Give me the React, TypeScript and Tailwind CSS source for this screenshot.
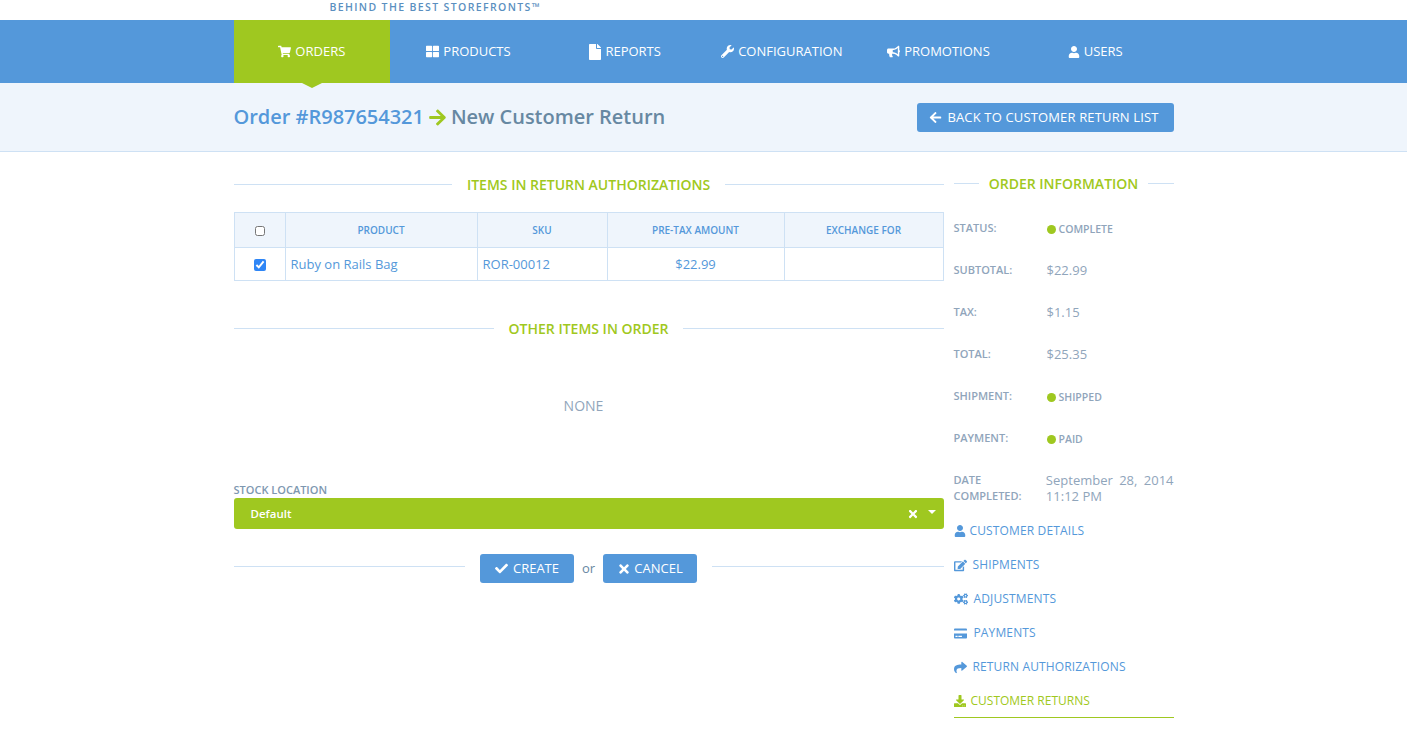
import type { ReactNode } from "react"
import {
  FaArrowLeft,
  FaArrowRight,
  FaBullhorn,
  FaCheck,
  FaCogs,
  FaCreditCard,
  FaDownload,
  FaEdit,
  FaFile,
  FaShare,
  FaShoppingCart,
  FaThLarge,
  FaTimes,
  FaUser,
  FaWrench,
} from "react-icons/fa"

const tabs = [
  { label: "ORDERS", icon: <FaShoppingCart className="text-[13px]" />, active: true },
  { label: "PRODUCTS", icon: <FaThLarge className="text-[13px]" /> },
  { label: "REPORTS", icon: <FaFile className="text-[16px] -mx-[2px]" /> },
  { label: "CONFIGURATION", icon: <FaWrench className="text-[13px]" /> },
  { label: "PROMOTIONS", icon: <FaBullhorn className="text-[13px]" /> },
  { label: "USERS", icon: <FaUser className="text-[12px]" /> },
]

const sideLinks = [
  { label: "CUSTOMER DETAILS", icon: <FaUser className="text-[12px]" />, gap: "gap-[4px]" },
  { label: "SHIPMENTS", icon: <FaEdit className="text-[13px]" />, gap: "gap-[6px]" },
  { label: "ADJUSTMENTS", icon: <FaCogs className="text-[14px]" />, gap: "gap-[6px]" },
  { label: "PAYMENTS", icon: <FaCreditCard className="text-[13px]" />, gap: "gap-[7px]" },
  { label: "RETURN AUTHORIZATIONS", icon: <FaShare className="text-[13px]" />, gap: "gap-[6px]" },
]

const SectionTitle = ({ title, gap = "gap-[15px]" }: { title: string; gap?: string }) => (
  <div className={`flex items-center ${gap} h-[20px]`}>
    <div className="flex-1 h-px bg-[#cee1f4] -mt-px" />
    <h2 className="text-[14px] font-semibold leading-5 text-[#9fc820]">{title}</h2>
    <div className="flex-1 h-px bg-[#cee1f4] -mt-px" />
  </div>
)

const ActionButton = ({ icon, children, className = "" }: { icon: ReactNode; children: ReactNode; className?: string }) => (
  <button className={`flex items-center justify-center gap-[5px] h-[29px] rounded-[3px] bg-[#5498da] text-white text-[13px] font-medium ${className}`}>
    {icon}
    <span>{children}</span>
  </button>
)

const InfoRow = ({ label, children }: { label: ReactNode; children: ReactNode }) => (
  <div className="flex h-[42px] items-start">
    <div className="w-[93px] text-[11px] font-semibold leading-4 text-[#90a5bb]">{label}</div>
    <div className="flex-1 text-[13px] leading-4 text-[#90a5bb] whitespace-nowrap">{children}</div>
  </div>
)

const Status = ({ label }: { label: string }) => (
  <div className="flex items-center gap-[3px] h-4 mt-px text-[10.5px] font-semibold">
    <span className="w-[9px] h-[9px] rounded-full bg-[#9fc820]" />
    {label}
  </div>
)

const App = () => {
  return (
    <div className="h-[738px] overflow-hidden bg-white font-['Open_Sans',sans-serif]">
      <div className="h-5 overflow-hidden">
        <div className="w-[940px] mx-auto pl-[96px] pt-px text-[10.5px] font-semibold leading-[12px] tracking-[1.37px] text-[#5a8fc0]">
          BEHIND THE BEST STOREFRONTS™
        </div>
      </div>

      <nav className="h-[63px] bg-[#5498da]">
        <div className="w-[940px] mx-auto grid grid-cols-6 h-full">
          {tabs.map((tab) => (
            <a
              key={tab.label}
              className={`relative flex items-center justify-center gap-[4px] text-[13px] font-medium text-white ${tab.active ? "bg-[#9fc820]" : ""}`}
            >
              {tab.icon}
              {tab.label}
              {tab.active && (
                <span className="absolute left-1/2 top-full -ml-[10px] border-x-[10px] border-t-[5px] border-x-transparent border-t-[#9fc820]" />
              )}
            </a>
          ))}
        </div>
      </nav>

      <header className="h-[69px] bg-[#eff5fc] border-b border-[#cee1f4]">
        <div className="w-[940px] mx-auto flex items-center justify-between h-[68px]">
          <h1 className="flex items-center text-[20px] font-semibold tracking-[-0.02px] text-[#6788a2]">
            <span className="text-[#5498da]">Order #R987654321</span>
            <FaArrowRight className="mx-[4px] text-[19px] text-[#9fc820]" />
            New Customer Return
          </h1>
          <ActionButton icon={<FaArrowLeft className="text-[13px]" />} className="w-[257px] pt-px pr-[2px] tracking-[0.15px]">
            BACK TO CUSTOMER RETURN LIST
          </ActionButton>
        </div>
      </header>

      <main className="w-[940px] mx-auto flex gap-[10px] pt-[23px]">
        <section className="w-[710px]">
          <SectionTitle title="ITEMS IN RETURN AUTHORIZATIONS" />
          <table className="mt-[17px] w-full table-fixed border-collapse border border-[#cee1f4] text-[13px]">
            <colgroup>
              <col className="w-[51px]" />
              <col className="w-[192px]" />
              <col className="w-[130px]" />
              <col className="w-[177px]" />
              <col />
            </colgroup>
            <thead>
              <tr className="h-[35px] bg-[#eff5fc] text-[10px] font-semibold text-[#5498da]">
                <th className="border border-[#cee1f4] font-semibold">
                  <input type="checkbox" className="w-[10px] h-[10px] align-middle accent-[#2f86f6]" />
                </th>
                <th className="border border-[#cee1f4] font-semibold">PRODUCT</th>
                <th className="border border-[#cee1f4] font-semibold">SKU</th>
                <th className="border border-[#cee1f4] font-semibold">PRE-TAX AMOUNT</th>
                <th className="border border-[#cee1f4] font-semibold">EXCHANGE FOR</th>
              </tr>
            </thead>
            <tbody>
              <tr className="h-[33px] text-[#5498da]">
                <td className="border border-[#cee1f4] text-center">
                  <input type="checkbox" defaultChecked className="w-3 h-3 align-middle accent-[#2f86f6]" />
                </td>
                <td className="border border-[#cee1f4] px-[5px] pt-[2px]">Ruby on Rails Bag</td>
                <td className="border border-[#cee1f4] px-[5px] pt-[2px]">ROR-00012</td>
                <td className="border border-[#cee1f4] text-center pt-[2px]">$22.99</td>
                <td className="border border-[#cee1f4]" />
              </tr>
            </tbody>
          </table>

          <div className="mt-[38px]">
            <SectionTitle title="OTHER ITEMS IN ORDER" />
          </div>
          <p className="mt-[57px] pr-[10px] text-center text-[14px] leading-5 text-[#90a5bb]">NONE</p>

          <label className="block mt-[66px] text-[11px] font-semibold leading-[16px] text-[#7d97b0]">STOCK LOCATION</label>
          <div className="flex items-center h-[31px] rounded-[3px] bg-[#9fc820] pl-[17px] pr-[8px] text-[11.5px] font-semibold text-white">
            <span className="flex-1">Default</span>
            <FaTimes className="text-[12px]" />
            <span className="ml-[9px] mb-[3px] border-x-[4px] border-t-[4px] border-x-transparent border-t-white" />
          </div>

          <div className="mt-[25px] flex items-center">
            <div className="flex-1 h-px bg-[#cee1f4] -mt-[5px]" />
            <ActionButton icon={<FaCheck className="text-[13px]" />} className="ml-[15px] w-[94px]">
              CREATE
            </ActionButton>
            <span className="w-[29px] text-center text-[13px] text-[#6788a2]">or</span>
            <ActionButton icon={<FaTimes className="text-[14px] -mr-[2px]" />} className="mr-[15px] w-[94px]">
              CANCEL
            </ActionButton>
            <div className="flex-1 h-px bg-[#cee1f4] -mt-[5px]" />
          </div>
        </section>

        <aside className="w-[220px]">
          <div className="-mt-px">
            <SectionTitle title="ORDER INFORMATION" gap="gap-[10px]" />
          </div>
          <div className="mt-[26px]">
            <InfoRow label="STATUS:">
              <Status label="COMPLETE" />
            </InfoRow>
            <InfoRow label="SUBTOTAL:">$22.99</InfoRow>
            <InfoRow label="TAX:">$1.15</InfoRow>
            <InfoRow label="TOTAL:">$25.35</InfoRow>
            <InfoRow label="SHIPMENT:">
              <Status label="SHIPPED" />
            </InfoRow>
            <InfoRow label="PAYMENT:">
              <Status label="PAID" />
            </InfoRow>
            <InfoRow
              label={
                <>
                  DATE
                  <br />
                  COMPLETED:
                </>
              }
            >
              <span className="[word-spacing:3px]">September 28, 2014</span>
              <br />
              11:12 PM
            </InfoRow>
          </div>
          <ul>
            {sideLinks.map((link) => (
              <li key={link.label} className={`flex items-center ${link.gap} h-[34px] text-[12px] font-medium tracking-[0.14px] text-[#5498da]`}>
                {link.icon}
                {link.label}
              </li>
            ))}
            <li className="flex items-center gap-[5px] h-[34px] pt-px border-b border-[#9fc820] text-[12px] font-medium text-[#9fc820]">
              <FaDownload className="text-[12px]" />
              CUSTOMER RETURNS
            </li>
          </ul>
        </aside>
      </main>
    </div>
  )
}

export default App
